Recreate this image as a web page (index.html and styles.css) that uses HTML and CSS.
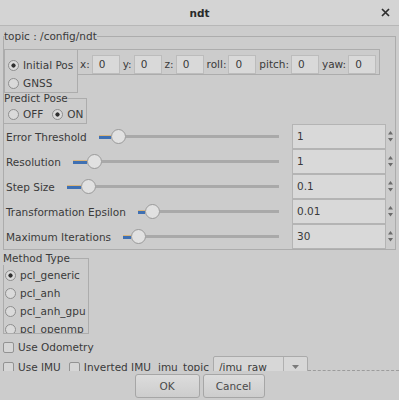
FILE: index.html
```html
<!DOCTYPE html>
<html>
<head>
<meta charset="utf-8">
<title>ndt</title>
<link rel="stylesheet" href="styles.css">
</head>
<body>
<div class="window">
  <div class="titlebar">
    <span></span>
    <span class="title">ndt</span>
    <span class="close"><svg width="9" height="9" viewBox="0 0 9 9"><path d="M1 1 L8 8 M8 1 L1 8" stroke="#2e2e2e" stroke-width="1.7" fill="none"/></svg></span>
  </div>
  <div class="main">
    <fieldset class="group topic">
      <legend>topic : /config/ndt</legend>
      <div class="pose-row">
        <div class="source-box">
          <div class="radio-row"><span class="radio checked"></span>Initial Pos</div>
          <div class="radio-row"><span class="radio"></span>GNSS</div>
        </div>
        <div class="coords">
          <span class="clabel">x:</span><span class="cinput">0</span>
          <span class="clabel">y:</span><span class="cinput">0</span>
          <span class="clabel">z:</span><span class="cinput">0</span>
          <span class="clabel">roll:</span><span class="cinput">0</span>
          <span class="clabel">pitch:</span><span class="cinput">0</span>
          <span class="clabel">yaw:</span><span class="cinput">0</span>
        </div>
      </div>
      <fieldset class="group predict">
        <legend>Predict Pose</legend>
        <div class="predict-row">
          <span class="radio"></span><span class="opt">OFF</span>
          <span class="radio checked"></span><span class="opt">ON</span>
        </div>
      </fieldset>
      <div class="param-row">
        <span class="plabel">Error Threshold</span>
        <div class="slider"><span class="fill" style="width:12px"></span><span class="handle"></span><span class="rest"></span></div>
        <div class="spin">1</div>
        <div class="arrows"><svg width="9" height="25" viewBox="0 0 9 25"><path d="M2 10.5 L7 10.5 L4.5 7 Z M2 14 L7 14 L4.5 17.5 Z" fill="#6b6b6b"/></svg></div>
      </div>
      <div class="param-row">
        <span class="plabel">Resolution</span>
        <div class="slider"><span class="fill" style="width:14px"></span><span class="handle"></span><span class="rest"></span></div>
        <div class="spin">1</div>
        <div class="arrows"><svg width="9" height="25" viewBox="0 0 9 25"><path d="M2 10.5 L7 10.5 L4.5 7 Z M2 14 L7 14 L4.5 17.5 Z" fill="#6b6b6b"/></svg></div>
      </div>
      <div class="param-row">
        <span class="plabel">Step Size</span>
        <div class="slider"><span class="fill" style="width:14px"></span><span class="handle"></span><span class="rest"></span></div>
        <div class="spin">0.1</div>
        <div class="arrows"><svg width="9" height="25" viewBox="0 0 9 25"><path d="M2 10.5 L7 10.5 L4.5 7 Z M2 14 L7 14 L4.5 17.5 Z" fill="#6b6b6b"/></svg></div>
      </div>
      <div class="param-row">
        <span class="plabel">Transformation Epsilon</span>
        <div class="slider"><span class="fill" style="width:7px"></span><span class="handle"></span><span class="rest"></span></div>
        <div class="spin">0.01</div>
        <div class="arrows"><svg width="9" height="25" viewBox="0 0 9 25"><path d="M2 10.5 L7 10.5 L4.5 7 Z M2 14 L7 14 L4.5 17.5 Z" fill="#6b6b6b"/></svg></div>
      </div>
      <div class="param-row">
        <span class="plabel">Maximum Iterations</span>
        <div class="slider"><span class="fill" style="width:8px"></span><span class="handle"></span><span class="rest"></span></div>
        <div class="spin">30</div>
        <div class="arrows"><svg width="9" height="25" viewBox="0 0 9 25"><path d="M2 10.5 L7 10.5 L4.5 7 Z M2 14 L7 14 L4.5 17.5 Z" fill="#6b6b6b"/></svg></div>
      </div>
    </fieldset>

    <fieldset class="group method">
      <legend>Method Type</legend>
      <div class="method-list">
        <div class="radio-row"><span class="radio checked"></span>pcl_generic</div>
        <div class="radio-row"><span class="radio"></span>pcl_anh</div>
        <div class="radio-row"><span class="radio"></span>pcl_anh_gpu</div>
        <div class="radio-row"><span class="radio"></span>pcl_openmp</div>
      </div>
    </fieldset>

    <div class="check-row odo"><span class="check"></span>Use Odometry</div>
    <div class="check-row imu">
      <span class="check"></span><span>Use IMU</span>
      <span class="check second"></span><span>Inverted IMU</span>
      <span class="topic-label">imu_topic</span>
      <div class="combo"><span class="combo-text">/imu_raw</span><span class="combo-btn"><svg width="7" height="4" viewBox="0 0 7 4"><path d="M0 0 L7 0 L3.5 4 Z" fill="#7a7a7a"/></svg></span></div>
      <span class="dash"></span>
    </div>
  </div>
  <div class="buttons">
    <div class="btn ok">OK</div>
    <div class="btn cancel">Cancel</div>
  </div>
</div>
</body>
</html>
```
FILE: styles.css
```css
* { box-sizing: border-box; }
html, body { margin: 0; padding: 0; }
body {
  width: 399px;
  height: 400px;
  overflow: hidden;
  background: #cccccc;
  font-family: "DejaVu Sans", "Noto Sans", sans-serif;
  font-size: 10.5px;
  color: #3a3a3a;
}
.window {
  width: 399px;
  height: 400px;
  display: flex;
  flex-direction: column;
  background: #cccccc;
}
.titlebar {
  height: 26px;
  flex: none;
  display: grid;
  grid-template-columns: 1fr auto 1fr;
  align-items: center;
  background: #d4d4d4;
  border-bottom: 1px solid #b7b7b7;
}
.title {
  font-weight: bold;
  font-size: 10.5px;
  color: #2a2a2a;
}
.close {
  justify-self: end;
  margin-right: 9px;
  display: flex;
}
.main {
  height: 345px;
  flex: none;
  overflow: hidden;
}
.group {
  margin: 0;
  padding: 0;
  border: 1px solid #acacac;
  min-width: 0;
}
.group > legend {
  padding: 0;
  line-height: 13px;
}
.topic {
  margin: 4px 3px 0 3px;
  padding: 6px 0 0 0;
}
.pose-row {
  display: flex;
  align-items: flex-start;
}
.source-box {
  width: 74px;
  height: 44px;
  border: 1px solid #acacac;
  padding: 6px 0 0 3px;
  flex: none;
}
.radio-row {
  display: flex;
  align-items: center;
  height: 18px;
  white-space: nowrap;
}
.radio {
  width: 11px;
  height: 11px;
  border-radius: 50%;
  border: 1px solid #8e8e8e;
  background: #dadada;
  margin-right: 4px;
  flex: none;
}
.radio.checked {
  background: radial-gradient(circle, #2f2f2f 0 1.8px, #dadada 2.4px);
}
.coords {
  display: flex;
  align-items: flex-start;
  width: 302px;
  height: 26px;
  border: 1px solid #acacac;
  border-left: none;
  padding: 5px 0 0 2px;
}
.clabel {
  line-height: 19px;
  margin-right: 2px;
  white-space: nowrap;
}
.cinput {
  width: 28px;
  height: 19px;
  margin-right: 3px;
  background: #d9d9d9;
  border: 1px solid #bcbcbc;
  padding-left: 6px;
  line-height: 17px;
}
.predict {
  width: 84px;
  margin: -1px 0 0 -1px;
}
.predict-row {
  display: flex;
  align-items: center;
  height: 18px;
  padding-left: 4px;
}
.predict-row .opt {
  margin-right: 9px;
}
.param-row {
  display: flex;
  align-items: center;
  height: 25px;
  padding-left: 2px;
}
.plabel {
  margin-right: 12px;
  white-space: nowrap;
}
.slider {
  flex: 1;
  display: flex;
  align-items: center;
  height: 15px;
}
.fill {
  height: 4px;
  background: #3f70b2;
  border-top: 1px solid #d8b47c;
  flex: none;
}
.handle {
  width: 15px;
  height: 15px;
  border-radius: 50%;
  background: #e1e1e1;
  border: 1px solid #9a9a9a;
  flex: none;
}
.rest {
  flex: 1;
  height: 3px;
  background: #a9a9a9;
}
.spin {
  width: 94px;
  height: 25px;
  margin-left: 13px;
  background: #d9d9d9;
  border: 1px solid #b4b4b4;
  padding-left: 4px;
  line-height: 23px;
  flex: none;
}
.arrows {
  width: 9px;
  height: 25px;
  flex: none;
  display: flex;
}
.method {
  width: 86px;
  margin: 2px 0 0 3px;
}
.method > legend {
  margin-left: -1px;
}
.method-list {
  height: 68px;
  overflow: hidden;
  padding: 1px 0 0 1px;
}
.check-row {
  display: flex;
  align-items: center;
  white-space: nowrap;
}
.odo {
  height: 18px;
  margin-top: 4px;
  padding-left: 3px;
}
.imu {
  height: 22px;
  padding-left: 3px;
}
.check {
  width: 11px;
  height: 11px;
  border: 1px solid #939393;
  border-radius: 2px;
  background: #d6d6d6;
  margin-right: 4px;
  flex: none;
}
.check.second {
  margin-left: 8px;
}
.topic-label {
  margin-left: 7px;
  margin-right: 4px;
}
.combo {
  width: 95px;
  height: 23px;
  display: flex;
  border: 1px solid #aaaaaa;
  border-radius: 2px;
  background: #d7d7d7;
  flex: none;
}
.combo-text {
  width: 70px;
  padding-left: 5px;
  line-height: 21px;
  border-right: 1px solid #b0b0b0;
}
.combo-btn {
  flex: 1;
  display: flex;
  align-items: center;
  justify-content: center;
}
.dash {
  flex: 1;
  align-self: flex-start;
  height: 15px;
  border-bottom: 1px dashed #9c9c9c;
}
.buttons {
  height: 29px;
  flex: none;
  display: flex;
  justify-content: center;
  align-items: flex-start;
  gap: 3px;
  padding-top: 3px;
}
.btn {
  height: 24px;
  border: 1px solid #a6a6a6;
  border-radius: 3px;
  background: linear-gradient(#dcdcdc, #cdcdcd);
  color: #4a4a4a;
  display: flex;
  align-items: center;
  justify-content: center;
}
.ok { width: 65px; }
.cancel { width: 62px; }
```
